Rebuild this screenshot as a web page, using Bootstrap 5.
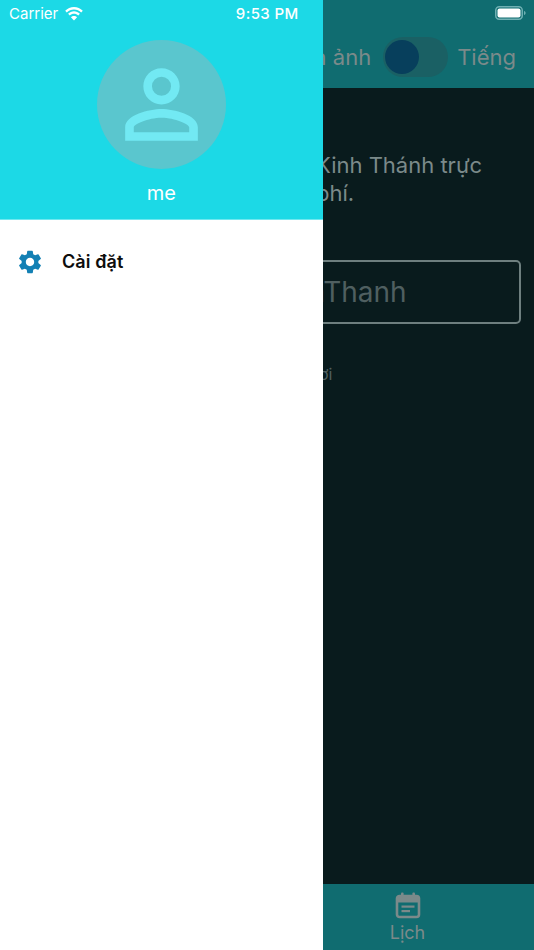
<!DOCTYPE html>
<html lang="vi">
<head>
    <meta charset="UTF-8">
    <title>Kinh Thánh</title>
    <meta name="viewport" content="width=device-width, initial-scale=1">
    <link href="https://cdn.jsdelivr.net/npm/bootstrap@5.3.2/dist/css/bootstrap.min.css" rel="stylesheet">
    <style>
        body {
            background-color: #091b1d;
            font-family: Inter, "Liberation Sans", sans-serif;
            overflow: hidden;
        }
        .app-shell { height: 950px; }

        /* page behind the drawer, dimmed */
        .page-head { height: 88px; background-color: #106c70; padding: 6px 8px 0 0; }
        .battery-icon { display: block; margin-left: auto; }
        .lang-row { height: 40px; margin-top: 17px; padding-right: 10px; color: #7b8a8a; font-size: 22px; }
        .lang-toggle { width: 65px; height: 40px; border-radius: 20px; background-color: #1a6064; padding: 3px 2px; margin: 0 9px 0 12px; }
        .lang-thumb { display: block; width: 34px; height: 34px; border-radius: 50%; background-color: #073f5c; }
        .page-body { background-color: #091b1d; color: #7b8a8a; padding-top: 63px; }
        .intro-text { margin: 0 0 0 316px; font-size: 22px; line-height: 28px; white-space: nowrap; }
        .search-box { height: 64px; margin: 53px 13px 0 0; border: 2px solid #6e7f7f; border-radius: 5px; color: #4f5f60; font-size: 28px; padding-left: 264px; }
        .hint-text { margin: 38px 0 0 240px; width: 89px; text-align: right; font-size: 16px; color: #4f5f60; white-space: nowrap; }
        .tab-strip { height: 66px; background-color: #106c70; color: #7b8a8a; padding-left: 323px; }
        .tab-item { width: 169px; padding-top: 8px; font-size: 18px; line-height: 22px; }
        .tab-label { margin-top: 3px; }

        /* drawer */
        .side-drawer { position: absolute; top: 0; left: 0; bottom: 0; width: 322.67px; background-color: #fff; }
        .drawer-head { height: 220px; background-color: #1cd9e6; border-bottom: 1px solid #6fe8f0; color: #fff; }
        .status-row { height: 28px; padding: 0 24px 0 9px; font-size: 15px; }
        .status-time { margin-left: auto; font-weight: 500; letter-spacing: .4px; }
        .wifi-icon { margin-left: 6px; }
        .avatar-disc { width: 129px; height: 129px; margin-top: 12px; border-radius: 50%; background-color: #5ac6ce; }
        .drawer-name { margin-top: 11px; font-size: 20px; line-height: 26px; }
        .menu-row { height: 84px; padding-left: 16px; color: #0d0d0d; font-size: 18px; font-weight: 600; }
        .menu-label { margin: 0 0 2px 18px; letter-spacing: .1px; }
    </style>
</head>
<body>

<div class="app-shell position-relative d-flex flex-column overflow-hidden">

    <!-- page under the drawer -->
    <header class="page-head">
        <svg class="battery-icon" width="31" height="14" viewBox="0 0 31 14">
            <rect x="0.75" y="0.75" width="26.500" height="12.500" rx="3.500" fill="none" stroke="#6fb0b3" stroke-width="1.500"/>
            <rect x="2.500" y="2.500" width="23" height="9" rx="2" fill="#fff"/>
            <path d="M29 5c1 .3 1.600 1 1.600 2s-.6 1.700-1.600 2z" fill="#6fb0b3"/>
        </svg>
        <div class="lang-row d-flex align-items-center justify-content-end">
            <span>Hình ảnh</span>
            <div class="lang-toggle"><span class="lang-thumb"></span></div>
            <span>Tiếng</span>
        </div>
    </header>

    <main class="page-body flex-grow-1">
        <p class="intro-text">Kinh Thánh trực<br>phí.</p>
        <div class="search-box d-flex align-items-center">KinhThanh</div>
        <div class="hint-text">Mọi người ơi</div>
    </main>

    <nav class="tab-strip d-flex">
        <div class="tab-item d-flex flex-column align-items-center">
            <svg width="26" height="27" viewBox="0 0 26 27">
                <rect x="2" y="4" width="22" height="21" rx="2.500" fill="none" stroke="#7b8a8a" stroke-width="2.600"/>
                <rect x="2" y="4" width="22" height="6.500" fill="#7b8a8a"/>
                <rect x="6" y="0.500" width="2.600" height="5" rx="1" fill="#7b8a8a"/>
                <rect x="17.400" y="0.500" width="2.600" height="5" rx="1" fill="#7b8a8a"/>
                <rect x="6.500" y="13.500" width="13" height="2.200" fill="#7b8a8a"/>
                <rect x="6.500" y="18" width="8.500" height="2.200" fill="#7b8a8a"/>
            </svg>
            <span class="tab-label">Lịch</span>
        </div>
    </nav>

    <!-- drawer -->
    <aside class="side-drawer">
        <div class="drawer-head d-flex flex-column align-items-center">
            <div class="status-row d-flex align-items-center w-100">
                <span>Carrier</span>
                <svg class="wifi-icon" width="20" height="14" viewBox="0 0 20 14" fill="#fff">
                    <path d="M10 2.600c2.800 0 5.300 1.100 7.200 2.900l1.600-1.700C16.500 1.500 13.400 0 10 0S3.500 1.500 1.200 3.800l1.600 1.700C4.700 3.700 7.200 2.600 10 2.600z"/>
                    <path d="M10 6.800c1.600 0 3.100.6 4.200 1.700l1.700-1.700C14.300 5.200 12.300 4.200 10 4.200s-4.300 1-5.900 2.600l1.700 1.700C6.900 7.400 8.400 6.800 10 6.800z"/>
                    <path d="M10 8.900c-1.200 0-2.300.5-3.100 1.300L10 13.600l3.100-3.400C12.300 9.400 11.200 8.900 10 8.900z"/>
                </svg>
                <span class="status-time">9:53 PM</span>
            </div>
            <div class="avatar-disc d-flex align-items-center justify-content-center">
                <svg width="109" height="109" viewBox="0 0 24 24" fill="#72e9f3">
                    <path d="M12 5.900a2.100 2.100 0 1 1 0 4.200 2.100 2.100 0 0 1 0-4.200m0 9c2.970 0 6.100 1.460 6.100 2.100v1.100H5.900V17c0-.64 3.130-2.100 6.100-2.100M12 4C9.790 4 8 5.790 8 8s1.790 4 4 4 4-1.790 4-4-1.790-4-4-4zm0 9c-2.670 0-8 1.340-8 4v3h16v-3c0-2.660-5.330-4-8-4z"/>
                </svg>
            </div>
            <div class="drawer-name">me</div>
        </div>
        <div class="menu-row d-flex align-items-center">
            <svg width="28" height="28" viewBox="0 0 24 24" fill="#1380b4">
                <path d="M19.140 12.940c.04-.3.060-.61.060-.94 0-.32-.02-.64-.07-.94l2.030-1.580a.49.49 0 0 0 .12-.61l-1.920-3.320a.488.488 0 0 0-.59-.22l-2.390.96c-.5-.38-1.030-.7-1.620-.94l-.36-2.540a.484.484 0 0 0-.48-.41h-3.840c-.24 0-.43.17-.47.41l-.36 2.540c-.59.24-1.130.57-1.620.94l-2.390-.96c-.22-.08-.47 0-.59.22L2.740 8.870c-.12.21-.08.47.12.61l2.030 1.580c-.05.3-.09.63-.09.94s.02.64.07.94l-2.030 1.580a.49.49 0 0 0-.12.61l1.920 3.320c.12.22.37.29.59.22l2.390-.96c.5.38 1.030.7 1.620.94l.36 2.540c.05.24.24.41.48.41h3.840c.24 0 .44-.17.47-.41l.36-2.540c.59-.24 1.130-.56 1.620-.94l2.390.96c.22.08.47 0 .59-.22l1.920-3.320c.12-.22.07-.47-.12-.61l-2.010-1.580zM12 15.600c-1.980 0-3.600-1.620-3.600-3.600s1.620-3.600 3.600-3.600 3.600 1.620 3.600 3.600-1.620 3.600-3.600 3.600z"/>
            </svg>
            <span class="menu-label">Cài đặt</span>
        </div>
    </aside>

</div>

</body>
</html>
